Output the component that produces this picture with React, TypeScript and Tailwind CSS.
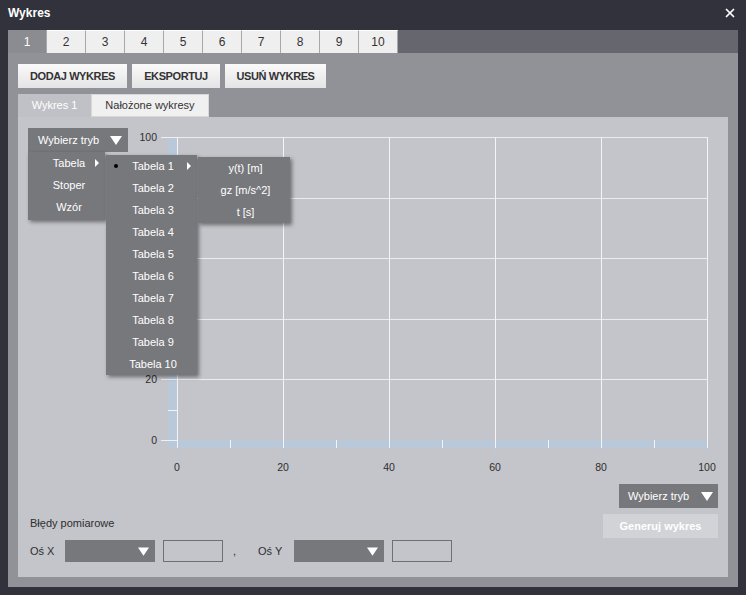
import { X } from "lucide-react";

const FONT = { fontFamily: '"Liberation Sans", Arial, sans-serif' };

function Caret({ className = "" }: { className?: string }) {
  return (
    <svg width="12" height="9" viewBox="0 0 12 9" className={className}>
      <path d="M0 0 H12 L6 9 Z" fill="#fff" />
    </svg>
  );
}

function RightArrow() {
  return (
    <svg width="4" height="8" viewBox="0 0 4 8">
      <path d="M0 0 L4 4 L0 8 Z" fill="#fff" />
    </svg>
  );
}

function Chart() {
  const x0 = 47;
  const x1 = 577;
  const yTop = 12;
  const yAxis = 315;
  const xs = [0, 1, 2, 3, 4, 5].map((k) => x0 + 106 * k);
  const ys = [0, 1, 2, 3, 4, 5].map((k) => yAxis - 60.6 * k);
  // 40, 60, 80 leżą pod otwartym menu
  const yLabels = ["0", "20", "", "", "", "100"];
  const xLabels = ["0", "20", "40", "60", "80", "100"];

  return (
    <svg width="590" height="355" className="block shrink-0">
      <rect x="38" y={yTop} width="9" height={323 - yTop} fill="#b9c9d9" />
      <rect x="38" y={yAxis} width={x1 - 38 + 1} height="8" fill="#b9c9d9" />

      {ys.slice(1).map((y) => (
        <line key={y} x1={x0} x2={x1} y1={Math.round(y) + 0.5} y2={Math.round(y) + 0.5} stroke="#ececf0" />
      ))}

      {xs.map((x) => (
        <g key={x}>
          <line x1={x + 0.5} x2={x + 0.5} y1={yTop} y2={323} stroke="#f4f4f6" />
          <line x1={x + 0.5} x2={x + 0.5} y1={323} y2={332} stroke="#b9c9d9" />
        </g>
      ))}

      {[0, 1, 2, 3, 4].map((k) => {
        const x = x0 + 53 + 106 * k;
        return <line key={x} x1={x + 0.5} x2={x + 0.5} y1={yAxis} y2={323} stroke="#f4f4f6" />;
      })}
      {[0, 1, 2, 3, 4].map((k) => {
        const y = Math.round(yAxis - 30.3 - 60.6 * k) + 0.5;
        return <line key={y} x1={38} x2={x0} y1={y} y2={y} stroke="#f4f4f6" />;
      })}
      {ys.map((y) => (
        <line key={"t" + y} x1={31} x2={x0} y1={Math.round(y) + 0.5} y2={Math.round(y) + 0.5} stroke="#eef0f4" />
      ))}

      {ys.map((y, i) =>
        yLabels[i] ? (
          <text key={"yl" + i} x="27" y={y + 4} textAnchor="end" fontSize="10.5" fill="#2e2e2e" style={FONT}>
            {yLabels[i]}
          </text>
        ) : null
      )}
      {xs.map((x, i) => (
        <text key={"xl" + i} x={x} y="346" textAnchor="middle" fontSize="10.5" fill="#2e2e2e" style={FONT}>
          {xLabels[i]}
        </text>
      ))}
    </svg>
  );
}

function ModeMenu() {
  const tables = Array.from({ length: 10 }, (_, i) => `Tabela ${i + 1}`);
  const shadow = "shadow-[2px_2px_4px_rgba(0,0,0,0.45)]";

  return (
    <div className="relative mt-[3px] w-[100px] shrink-0">
      <div className="flex h-[24px] items-center justify-between bg-[#77787c] pl-[10px] pr-[6px] text-[11px] text-white">
        <span>Wybierz tryb</span>
        <Caret />
      </div>

      {/* poziom 1 */}
      <div className={`absolute left-0 top-[24px] z-10 w-[77px] bg-[#77787c] pb-[2px] ${shadow}`}>
        {["Tabela", "Stoper", "Wzór"].map((t, i) => (
          <div key={t} className="relative flex h-[22px] items-center justify-center pl-[5px] text-[11px] text-white">
            {t}
            {i === 0 && (
              <span className="absolute right-[6px] top-[7px] flex">
                <RightArrow />
              </span>
            )}
          </div>
        ))}
      </div>

      {/* poziom 2 */}
      <div className={`absolute left-[78px] top-[27px] z-20 w-[91px] bg-[#77787c] ${shadow}`}>
        {tables.map((t, i) => (
          <div key={t} className="relative flex h-[22px] items-center justify-center pl-[3px] text-[11px] text-white">
            {i === 0 && <span className="absolute left-[8px] top-[9px] h-[4px] w-[4px] rounded-full bg-black" />}
            {t}
            {i === 0 && (
              <span className="absolute right-[6px] top-[7px] flex">
                <RightArrow />
              </span>
            )}
          </div>
        ))}
      </div>

      {/* poziom 3 */}
      <div className={`absolute left-[170px] top-[29px] z-30 w-[92px] bg-[#77787c] ${shadow}`}>
        {["y(t) [m]", "gz [m/s^2]", "t [s]"].map((t) => (
          <div key={t} className="flex h-[22px] items-center justify-center pl-[3px] text-[11px] text-white">
            {t}
          </div>
        ))}
      </div>
    </div>
  );
}

function AxisSelect() {
  return (
    <div className="flex h-[22px] w-[90px] items-center justify-end bg-[#77787c] pr-[6px]">
      <Caret className="h-[9px] w-[11px]" />
    </div>
  );
}

export default function App() {
  const tabs = ["1", "2", "3", "4", "5", "6", "7", "8", "9", "10"];

  return (
    <div className="h-[595px] w-[746px] overflow-hidden bg-[#32323c] text-[#2e2e2e]" style={FONT}>
      <header className="flex h-[30px] items-center justify-between pb-[4px] pl-[8px] pr-[9px]">
        <span className="text-[12px] font-bold text-white">Wykres</span>
        <X className="h-[14px] w-[14px] text-white" strokeWidth={3} />
      </header>

      <div className="mx-[8px] flex h-[23px] w-[730px] bg-[#66666f]">
        {tabs.map((t, i) => (
          <div
            key={t}
            className={
              i === 0
                ? "flex w-[39px] items-center justify-center border-r border-[#a8a8ac] bg-[#8b8c91] text-[12px] text-white"
                : "flex w-[39px] items-center justify-center border-r border-t border-[#a8a8ac] border-t-white bg-[#efeff0] text-[12px] text-[#333]"
            }
          >
            {t}
          </div>
        ))}
      </div>

      <div className="mx-[8px] h-[534px] w-[730px] bg-[#919297] px-[10px] pt-[11px]">
        <div className="flex gap-[5px]">
          {[
            ["DODAJ WYKRES", "w-[109px]"],
            ["EKSPORTUJ", "w-[88px]"],
            ["USUŃ WYKRES", "w-[101px]"],
          ].map(([label, w]) => (
            <button
              key={label}
              type="button"
              className={`flex h-[24px] ${w} items-center justify-center bg-gradient-to-b from-[#fafafa] to-[#e4e4e6] text-[11px] font-bold tracking-[-0.4px] text-[#333]`}
            >
              {label}
            </button>
          ))}
        </div>

        <div className="mt-[6px] flex h-[23px]">
          <div className="flex w-[73px] items-center justify-center bg-[#c0c1c6] text-[11px] text-white">Wykres 1</div>
          <div className="flex w-[118px] items-center justify-center border border-[#d8d8da] bg-[#f0f0f1] text-[11px] text-[#333]">
            Nałożone wykresy
          </div>
        </div>

        <div className="h-[460px] w-[710px] bg-[#c4c5ca] pt-[8px]">
          <div className="flex pl-[10px]">
            <ModeMenu />
            <div className="ml-[2px]">
              <Chart />
            </div>
          </div>

          <div className="flex justify-between pl-[12px] pr-[10px]">
            <div className="pt-[36px]">
              <div className="h-[14px] text-[11px] leading-[14px]">Błędy pomiarowe</div>
              <div className="mt-[10px] flex h-[22px] items-center text-[11px]">
                <span className="w-[35px]">Oś X</span>
                <AxisSelect />
                <div className="ml-[8px] h-[22px] w-[60px] border border-[#6f7074]" />
                <span className="ml-[10px]">,</span>
                <span className="ml-[22px] w-[36px]">Oś Y</span>
                <AxisSelect />
                <div className="ml-[8px] h-[22px] w-[60px] border border-[#6f7074]" />
              </div>
            </div>

            <div className="flex flex-col items-end gap-[6px] pt-[4px]">
              <div className="flex h-[24px] w-[99px] items-center justify-between bg-[#77787c] pl-[9px] pr-[5px] text-[11px] text-white">
                <span>Wybierz tryb</span>
                <Caret />
              </div>
              <button
                type="button"
                className="h-[24px] w-[115px] bg-[#d2d3d7] text-[11px] font-bold text-white"
              >
                Generuj wykres
              </button>
            </div>
          </div>
        </div>
      </div>
    </div>
  );
}
